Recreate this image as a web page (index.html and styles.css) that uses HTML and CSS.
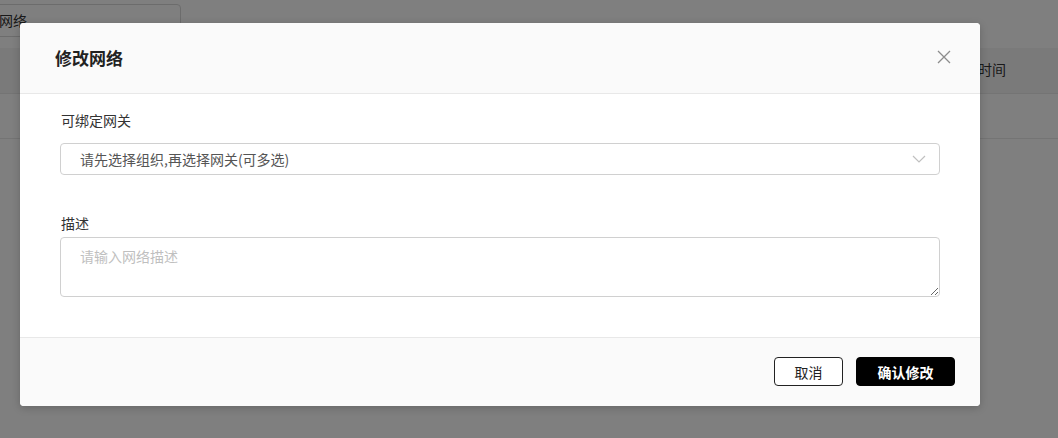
FILE: index.html
```html
<!DOCTYPE html>
<html lang="zh-CN">
<head>
    <meta charset="UTF-8">
    <meta name="viewport" content="width=device-width, initial-scale=1.0">
    <title>修改网络</title>
    <link rel="stylesheet" href="styles.css">
</head>
<body>
    <div class="page">
        <div class="toolbar">
            <div class="search">网络</div>
        </div>
        <div class="table-head">
            <span class="col-time">时间</span>
        </div>
        <div class="table-row"></div>
    </div>

    <div class="mask">
        <div class="modal">
            <div class="modal-header">
                <h2>修改网络</h2>
                <span class="close">
                    <svg width="14" height="14" viewBox="0 0 14 14">
                        <path d="M1 1 L13 13 M13 1 L1 13" stroke="#8c8c8c" stroke-width="1.3" fill="none"/>
                    </svg>
                </span>
            </div>
            <div class="modal-body">
                <div class="field">
                    <label>可绑定网关</label>
                    <div class="select">
                        <span>请先选择组织,再选择网关(可多选)</span>
                        <svg width="14" height="8" viewBox="0 0 14 8">
                            <path d="M1 1 L7 7 L13 1" stroke="#c0c0c0" stroke-width="1.2" fill="none"/>
                        </svg>
                    </div>
                </div>
                <div class="field">
                    <label>描述</label>
                    <textarea placeholder="请输入网络描述"></textarea>
                </div>
            </div>
            <div class="modal-footer">
                <button class="btn">取消</button>
                <button class="btn btn-primary">确认修改</button>
            </div>
        </div>
    </div>
</body>
</html>
```

FILE: styles.css
```css
* {
    margin: 0;
    padding: 0;
    box-sizing: border-box;
    font-family: 'Noto Sans CJK SC', 'Noto Sans', sans-serif;
}

body {
    background: #fff;
    color: #333;
    width: 1058px;
    height: 438px;
    overflow: hidden;
    position: relative;
}

/* page behind the mask */
.toolbar {
    height: 48px;
    padding-top: 4px;
}

.search {
    width: 201px;
    height: 33px;
    margin-left: -20px;
    border: 1px solid #d9d9d9;
    border-radius: 4px;
    padding: 5px 0 0 18px;
    font-size: 14px;
    line-height: 20px;
    color: #333;
}

.table-head {
    height: 46px;
    background: #f5f5f5;
    border-bottom: 1px solid #e8e8e8;
    display: flex;
    justify-content: flex-end;
    align-items: center;
    padding: 0 52px 4px 0;
    font-size: 14px;
}

.table-row {
    height: 45px;
    border-bottom: 1px solid #e8e8e8;
}

/* modal */
.mask {
    position: absolute;
    inset: 0;
    background: rgba(0, 0, 0, 0.5);
}

.modal {
    position: absolute;
    left: 20px;
    top: 23px;
    width: 960px;
    background: #fff;
    border-radius: 4px;
    overflow: hidden;
    box-shadow: 0 2px 8px rgba(0, 0, 0, 0.2);
}

.modal-header {
    height: 71px;
    background: #fafafa;
    border-bottom: 1px solid #e8e8e8;
    display: flex;
    align-items: center;
    justify-content: space-between;
    padding: 0 29px 2px 35px;
}

.modal-header h2 {
    font-size: 17px;
    font-weight: bold;
    color: #222;
}

.close {
    display: flex;
}

.modal-body {
    padding: 16px 40px 40px 40px;
}

.field label {
    display: block;
    font-size: 14px;
    line-height: 20px;
    color: #333;
    margin-left: 1px;
}

.field + .field {
    margin-top: 38px;
}

.select {
    margin-top: 13px;
    height: 32px;
    border: 1px solid #d0d0d0;
    border-radius: 4px;
    display: flex;
    align-items: center;
    justify-content: space-between;
    padding: 0 13px 0 19px;
    font-size: 14px;
    color: #555;
}

textarea {
    display: block;
    margin-top: 4px;
    width: 100%;
    height: 60px;
    border: 1px solid #d0d0d0;
    border-radius: 4px;
    padding: 8px 19px;
    font-size: 14px;
    line-height: 20px;
    color: #333;
    background: #fff;
}

textarea::placeholder {
    color: #bfbfbf;
}

.modal-footer {
    height: 69px;
    background: #fafafa;
    border-top: 1px solid #e8e8e8;
    display: flex;
    justify-content: flex-end;
    align-items: center;
    gap: 13px;
    padding: 0 25px 1px 0;
}

.btn {
    height: 29px;
    min-width: 69px;
    padding: 0 18px;
    background: #fff;
    color: #222;
    border: 1px solid #222;
    border-radius: 4px;
    font-size: 14px;
    cursor: pointer;
}

.btn-primary {
    min-width: 99px;
    background: #000;
    border-color: #000;
    color: #fff;
    font-weight: bold;
}
```
